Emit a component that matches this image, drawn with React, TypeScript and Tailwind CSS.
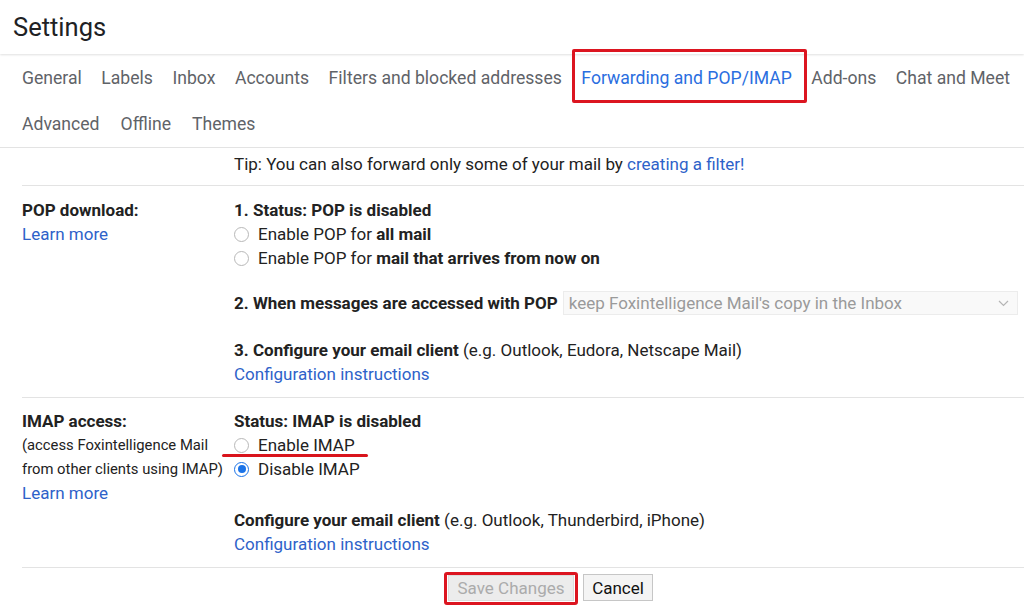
import React from "react";

const tabsRowOne = ["General", "Labels", "Inbox", "Accounts", "Filters and blocked addresses"];
const tabsRowOneEnd = ["Add-ons", "Chat and Meet"];
const tabsRowTwo = ["Advanced", "Offline", "Themes"];

const Radio = ({ checked = false }: { checked?: boolean }): JSX.Element => (
  <span
    className={
      checked
        ? "flex h-[15px] w-[15px] shrink-0 items-center justify-center rounded-full border-[1.5px] border-[#1a73e8] bg-white"
        : "h-[15px] w-[15px] shrink-0 rounded-full border border-[#b8b8b8] bg-white"
    }
  >
    {checked ? <span className="h-[8px] w-[8px] rounded-full bg-[#1a73e8]" /> : null}
  </span>
);

const RadioRow = ({
  checked,
  children,
  underline,
}: {
  checked?: boolean;
  children: React.ReactNode;
  underline?: boolean;
}): JSX.Element => (
  <div className="relative flex h-6 items-center gap-[9px]">
    <Radio checked={checked} />
    <span>{children}</span>
    {underline ? (
      <span className="absolute left-[-12px] top-[21px] h-[3px] w-[146px] rounded-full bg-[#d9141c]" />
    ) : null}
  </div>
);

const App = (): JSX.Element => {
  return (
    <div className="min-h-[609px] w-[1024px] overflow-hidden bg-white font-['Roboto',sans-serif] text-[17px] leading-6 text-[#222]">
      {/* header */}
      <div className="flex h-[54px] items-center pl-[13px] shadow-[0_1px_2px_rgba(0,0,0,0.12)]">
        <h1 className="text-[25.5px] font-normal text-[#202124]">Settings</h1>
      </div>

      {/* tabs */}
      <div className="border-b border-[#e3e3e3] pl-[22px] text-[17.6px] text-[#5f6368]">
        <div className="flex h-[47px] items-center gap-[19.5px]">
          {tabsRowOne.map((t) => (
            <span key={t}>{t}</span>
          ))}
          <span className="relative text-[#2a6ee0]">
            Forwarding and POP/IMAP
            <span className="absolute bottom-[-13px] left-[-9px] right-[-15px] top-[-17px] rounded-[2px] border-[3px] border-[#dc1520]" />
          </span>
          {tabsRowOneEnd.map((t) => (
            <span key={t}>{t}</span>
          ))}
        </div>
        <div className="flex h-[46px] items-center gap-[21px]">
          {tabsRowTwo.map((t) => (
            <span key={t}>{t}</span>
          ))}
        </div>
      </div>

      {/* tip */}
      <div className="flex h-[37px] items-center pb-[6px] pl-[234px]">
        <span>
          Tip: You can also forward only some of your mail by{" "}
          <span className="text-[#2e62c9]">creating a filter!</span>
        </span>
      </div>

      <div className="ml-[22px] border-t border-[#e3e3e3]">
        {/* POP */}
        <div className="flex pb-[11px] pt-[12px]">
          <div className="w-[212px] shrink-0">
            <div className="font-bold">POP download:</div>
            <div className="text-[#2e62c9]">Learn more</div>
          </div>
          <div className="flex-1">
            <div className="font-bold">1. Status: POP is disabled</div>
            <RadioRow>
              Enable POP for <b>all mail</b>
            </RadioRow>
            <RadioRow>
              Enable POP for <b>mail that arrives from now on</b>
            </RadioRow>
            <div className="mt-[21px] flex items-center gap-[5px]">
              <span className="font-bold">2. When messages are accessed with POP</span>
              <div className="mr-[6px] flex h-[24px] flex-1 items-center justify-between border border-[#ececec] bg-[#f9f9f9] pl-[5px] pr-[8px] text-[#9a9a9a]">
                <span>keep Foxintelligence Mail's copy in the Inbox</span>
                <svg width="11" height="7" viewBox="0 0 11 7" fill="none">
                  <path d="M1 1l4.5 4.5L10 1" stroke="#b5b5b5" strokeWidth="1.2" />
                </svg>
              </div>
            </div>
            <div className="mt-[23px]">
              <b>3. Configure your email client</b> (e.g. Outlook, Eudora, Netscape Mail)
            </div>
            <div className="text-[#2e62c9]">Configuration instructions</div>
          </div>
        </div>

        {/* IMAP */}
        <div className="flex border-t border-[#e3e3e3] pb-[11px] pt-[11px]">
          <div className="w-[212px] shrink-0">
            <div className="font-bold">IMAP access:</div>
            <div className="text-[14.8px]">(access Foxintelligence Mail</div>
            <div className="text-[14.8px]">from other clients using IMAP)</div>
            <div className="text-[#2e62c9]">Learn more</div>
          </div>
          <div className="flex-1">
            <div className="font-bold">Status: IMAP is disabled</div>
            <RadioRow underline>Enable IMAP</RadioRow>
            <RadioRow checked>Disable IMAP</RadioRow>
            <div className="mt-[27px]">
              <b>Configure your email client</b> (e.g. Outlook, Thunderbird, iPhone)
            </div>
            <div className="text-[#2e62c9]">Configuration instructions</div>
          </div>
        </div>

        {/* buttons */}
        <div className="flex items-center gap-[9px] border-t border-[#e3e3e3] pl-[426px] pt-[6px]">
          <div className="relative">
            <button className="h-[26px] w-[126px] border border-[#dcdcdc] bg-[#ececec] text-[#ababab]">
              Save Changes
            </button>
            <span className="absolute -bottom-[4px] -left-[4px] -right-[4px] -top-[3px] rounded-[3px] border-[3px] border-[#dc1520]" />
          </div>
          <button className="h-[27px] w-[70px] border border-[#c6c6c6] bg-[#f4f4f4] text-[#111]">
            Cancel
          </button>
        </div>
      </div>
    </div>
  );
};

export default App;
